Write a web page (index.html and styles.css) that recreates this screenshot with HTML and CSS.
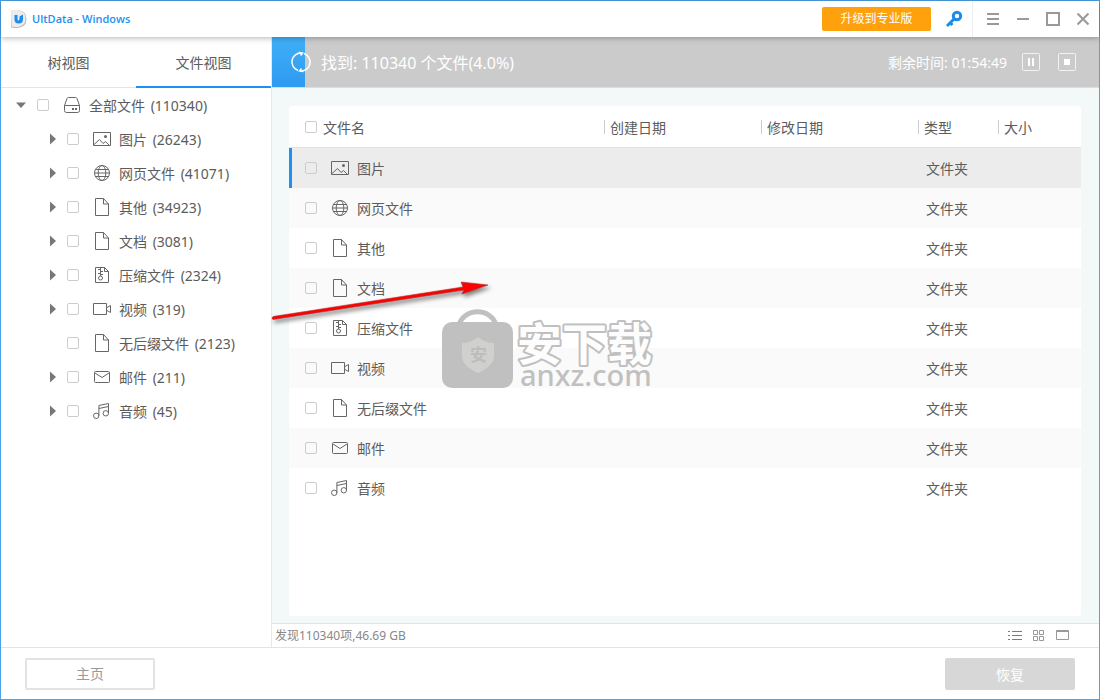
FILE: index.html
```html
<!DOCTYPE html>
<html lang="zh-CN">
<head>
<meta charset="utf-8">
<title>UltData - Windows</title>
<link rel="stylesheet" href="styles.css">
</head>
<body>
<svg class="sprite" aria-hidden="true">
  <symbol id="i-drive" viewBox="0 0 18 18"><path d="M1.500 9.500 4 2.500Q4.500 1.500 5.500 1.500h7Q13.500 1.500 14 2.500l2.500 7M1.500 9.500h15v5q0 2-2 2h-11q-2 0-2-2z"/><path d="M9 12h2v2H9zM12 12h2v2h-2z" class="solid"/></symbol>
  <symbol id="i-image" viewBox="0 0 18 18"><path d="M.5 2.500h17v13H.5zM1 14.500l5.500-5 3.500 4 2.500-2 3.500 3.500"/><circle cx="12.500" cy="6.500" r="1.500" class="solid"/></symbol>
  <symbol id="i-globe" viewBox="0 0 18 18"><circle cx="9" cy="9" r="7.500"/><ellipse cx="9" cy="9" rx="3.800" ry="7.500"/><path d="M2.500 5.500h13M1.500 9h15M2.500 12.500h13"/></symbol>
  <symbol id="i-file" viewBox="0 0 18 18"><path d="M2.500.5h8l5 5.500v11.500h-13zM10.500.5v5.500h5"/></symbol>
  <symbol id="i-zip" viewBox="0 0 18 18"><path d="M2.500 1.500h9l4 4v11h-13zM11.500 1.500v4h4M7.500 2v8M5 3.500h2.500M7.500 5.500H10M5 7.500h2.500M7.500 8.500H10"/><circle cx="7.500" cy="12" r="2"/></symbol>
  <symbol id="i-video" viewBox="0 0 18 18"><path d="M.5 3.500h13v11H.5zM14 7.500l3.500-2v7l-3.500-2"/></symbol>
  <symbol id="i-mail" viewBox="0 0 18 18"><rect x="1.500" y="3.500" width="15" height="11" rx="1"/><path d="M2 5l7 4.500L16 5"/></symbol>
  <symbol id="i-music" viewBox="0 0 18 18"><circle cx="3.200" cy="13.800" r="2.700"/><circle cx="12.800" cy="11.300" r="2.700"/><path d="M5.900 13.800V3.500l9.600-2v9.800M5.900 6.500l9.600-2"/></symbol>
  <symbol id="i-open" viewBox="0 0 12 12"><path d="M1 3.500h10L6 9z" class="fold"/></symbol>
  <symbol id="i-closed" viewBox="0 0 12 12"><path d="M3 .5v11L9 6z" class="fold"/></symbol>
</svg>

<div class="window">
  <header class="titlebar">
    <svg class="logo" viewBox="0 0 16 18" aria-hidden="true"><path d="M0 0h7q8.500 1 8.500 9T7 18H2q-2 0-2-2z" fill="#bbb"/><path d="M0 0h7q7.500 1 7.500 8.500T7 17H2q-1.500 0-1.500-2z" fill="#ececec"/><path d="M3.500 5h3v4q0 1.500 1 1.500T8.500 9V6.500L12 4.500V9q0 4.500-4.300 4.500T3.500 9z" fill="#1b8dea"/></svg>
    <h1 class="title">UltData - Windows</h1>
    <button class="upgrade" type="button">升级到专业版</button>
    <button class="tool key" type="button" aria-label="注册"><svg viewBox="0 0 18 18"><circle cx="12" cy="6" r="3.700"/><path d="M9.500 8.500 2 16M4.500 12l3 3M2 14l2 2"/></svg></button>
    <div class="controls">
      <button class="tool" type="button" aria-label="菜单"><svg viewBox="0 0 14 14"><path d="M1 2h12M1 7h12M1 12h12"/></svg></button>
      <button class="tool" type="button" aria-label="最小化"><svg viewBox="0 0 14 14"><path d="M1 7h12"/></svg></button>
      <button class="tool" type="button" aria-label="最大化"><svg viewBox="0 0 14 14"><path d="M1 1h12v12H1z"/></svg></button>
      <button class="tool" type="button" aria-label="关闭"><svg viewBox="0 0 14 14"><path d="M1.500 1.500l11 11M12.500 1.500l-11 11"/></svg></button>
    </div>
  </header>

  <div class="body">
    <aside class="sidebar">
      <nav class="tabs">
        <button class="tab" type="button">树视图</button>
        <button class="tab active" type="button">文件视图</button>
      </nav>
      <ul class="tree">
        <li class="node root"><svg class="twist"><use href="#i-open"/></svg><label class="pick"><input type="checkbox"><svg class="icon"><use href="#i-drive"/></svg><span class="name">全部文件 <span class="count">(110340)</span></span></label></li>
        <li class="node"><svg class="twist"><use href="#i-closed"/></svg><label class="pick"><input type="checkbox"><svg class="icon"><use href="#i-image"/></svg><span class="name">图片 <span class="count">(26243)</span></span></label></li>
        <li class="node"><svg class="twist"><use href="#i-closed"/></svg><label class="pick"><input type="checkbox"><svg class="icon"><use href="#i-globe"/></svg><span class="name">网页文件 <span class="count">(41071)</span></span></label></li>
        <li class="node"><svg class="twist"><use href="#i-closed"/></svg><label class="pick"><input type="checkbox"><svg class="icon"><use href="#i-file"/></svg><span class="name">其他 <span class="count">(34923)</span></span></label></li>
        <li class="node"><svg class="twist"><use href="#i-closed"/></svg><label class="pick"><input type="checkbox"><svg class="icon"><use href="#i-file"/></svg><span class="name">文档 <span class="count">(3081)</span></span></label></li>
        <li class="node"><svg class="twist"><use href="#i-closed"/></svg><label class="pick"><input type="checkbox"><svg class="icon"><use href="#i-zip"/></svg><span class="name">压缩文件 <span class="count">(2324)</span></span></label></li>
        <li class="node"><svg class="twist"><use href="#i-closed"/></svg><label class="pick"><input type="checkbox"><svg class="icon"><use href="#i-video"/></svg><span class="name">视频 <span class="count">(319)</span></span></label></li>
        <li class="node"><svg class="twist"></svg><label class="pick"><input type="checkbox"><svg class="icon"><use href="#i-file"/></svg><span class="name">无后缀文件 <span class="count">(2123)</span></span></label></li>
        <li class="node"><svg class="twist"><use href="#i-closed"/></svg><label class="pick"><input type="checkbox"><svg class="icon"><use href="#i-mail"/></svg><span class="name">邮件 <span class="count">(211)</span></span></label></li>
        <li class="node"><svg class="twist"><use href="#i-closed"/></svg><label class="pick"><input type="checkbox"><svg class="icon"><use href="#i-music"/></svg><span class="name">音频 <span class="count">(45)</span></span></label></li>
      </ul>
    </aside>

    <main class="main">
      <section class="scan">
        <div class="scan-fill" style="width: 4%"></div>
        <svg class="spinner" viewBox="0 0 22 22" aria-hidden="true"><path d="M8 19.500A9 9 0 0 1 11.500 2M8.500 1.500l4 .5-2 2.500M14 2.500A9 9 0 0 1 10.500 20M13.500 20.500l-4-.5 2-2.500"/></svg>
        <span class="found">找到: 110340 个文件(4.0%)</span>
        <span class="remaining">剩余时间: 01:54:49</span>
        <button class="scan-btn" type="button" aria-label="暂停"><svg viewBox="0 0 18 18"><rect x=".5" y=".5" width="17" height="17" rx="1"/><path d="M6 5h2v8H6zM10 5h2v8h-2z" class="white"/></svg></button>
        <button class="scan-btn" type="button" aria-label="停止"><svg viewBox="0 0 18 18"><rect x=".5" y=".5" width="17" height="17" rx="1"/><path d="M6 6h6v6H6z" class="white"/></svg></button>
      </section>

      <section class="content">
        <div class="panel">
          <table class="files">
            <colgroup><col class="c-name"><col class="c-date"><col class="c-date"><col class="c-type"><col class="c-size"></colgroup>
            <thead>
              <tr><th><label class="pick all"><input type="checkbox"><span class="name">文件名</span></label></th><th><span class="head"><span class="name">创建日期</span></span></th><th><span class="head"><span class="name">修改日期</span></span></th><th><span class="head"><span class="name">类型</span></span></th><th><span class="head"><span class="name">大小</span></span></th></tr>
            </thead>
            <tbody>
              <tr class="selected"><td><label class="pick"><input type="checkbox"><svg class="icon"><use href="#i-image"/></svg><span class="name">图片</span></label></td><td></td><td></td><td><span class="name">文件夹</span></td><td></td></tr>
              <tr><td><label class="pick"><input type="checkbox"><svg class="icon"><use href="#i-globe"/></svg><span class="name">网页文件</span></label></td><td></td><td></td><td><span class="name">文件夹</span></td><td></td></tr>
              <tr><td><label class="pick"><input type="checkbox"><svg class="icon"><use href="#i-file"/></svg><span class="name">其他</span></label></td><td></td><td></td><td><span class="name">文件夹</span></td><td></td></tr>
              <tr><td><label class="pick"><input type="checkbox"><svg class="icon"><use href="#i-file"/></svg><span class="name">文档</span></label></td><td></td><td></td><td><span class="name">文件夹</span></td><td></td></tr>
              <tr><td><label class="pick"><input type="checkbox"><svg class="icon"><use href="#i-zip"/></svg><span class="name">压缩文件</span></label></td><td></td><td></td><td><span class="name">文件夹</span></td><td></td></tr>
              <tr><td><label class="pick"><input type="checkbox"><svg class="icon"><use href="#i-video"/></svg><span class="name">视频</span></label></td><td></td><td></td><td><span class="name">文件夹</span></td><td></td></tr>
              <tr><td><label class="pick"><input type="checkbox"><svg class="icon"><use href="#i-file"/></svg><span class="name">无后缀文件</span></label></td><td></td><td></td><td><span class="name">文件夹</span></td><td></td></tr>
              <tr><td><label class="pick"><input type="checkbox"><svg class="icon"><use href="#i-mail"/></svg><span class="name">邮件</span></label></td><td></td><td></td><td><span class="name">文件夹</span></td><td></td></tr>
              <tr><td><label class="pick"><input type="checkbox"><svg class="icon"><use href="#i-music"/></svg><span class="name">音频</span></label></td><td></td><td></td><td><span class="name">文件夹</span></td><td></td></tr>
            </tbody>
          </table>
        </div>
      </section>

      <div class="status">
        <span class="summary">发现110340项,46.69 GB</span>
        <button class="view on" type="button" aria-label="列表"><svg viewBox="0 0 14 12"><path d="M0 1.500h2M4 1.500h10M0 5.500h2M4 5.500h10M0 9.500h2M4 9.500h10"/></svg></button>
        <button class="view" type="button" aria-label="网格"><svg viewBox="0 0 14 12"><path d="M1.500.5h4v4h-4zM7.500.5h4v4h-4zM1.500 6.500h4v4h-4zM7.500 6.500h4v4h-4z"/></svg></button>
        <button class="view" type="button" aria-label="预览"><svg viewBox="0 0 14 12"><path d="M.5.5h12v9H.5zM0 1.500h13"/></svg></button>
      </div>
    </main>
  </div>

  <footer class="footer">
    <button class="btn home" type="button">主页</button>
    <button class="btn recover" type="button">恢复</button>
  </footer>

  <svg class="arrow" viewBox="0 0 226 50" aria-hidden="true"><path d="M2 37.500 192 8l-2-5 27 3-26 9 2-4L2 40.500q-2-1 0-3z" fill="#f00" stroke="#a33" stroke-width=".6"/></svg>
  <svg class="watermark" viewBox="0 0 220 84" aria-hidden="true">
    <path d="M19 17a19 17 0 0 1 37 0" fill="none" stroke="#c0c0c0" stroke-width="5"/>
    <rect x="2" y="14" width="71" height="66" rx="10" fill="#c0c0c0"/>
    <path d="M38 29q7 6 16 6v13q0 10-16 17-16-7-16-17V35q9 0 16-6z" fill="#d0d0cf"/>
    <text x="30" y="53" class="badge">安</text>
    <text x="77" y="53" class="brand">安下载</text>
    <text x="80" y="78" class="domain">anxz.com</text>
  </svg>
</div>
</body>
</html>
```
FILE: styles.css
```css
* { box-sizing: border-box; }

body {
  margin: 0;
  color: #5c5c5c;
  font: 14px/20px "Noto Sans", "Noto Sans CJK SC", sans-serif;
}

button {
  padding: 0;
  border: 0;
  background: none;
  color: inherit;
  font: inherit;
}

svg { flex: none; }

.sprite { position: absolute; width: 0; height: 0; }

.window {
  position: relative;
  display: flex;
  flex-direction: column;
  min-height: 100vh;
  border: 1px solid #4ba3ea;
  background: #fff;
}

/* Title bar */
.titlebar {
  position: relative;
  z-index: 2;
  display: flex;
  align-items: center;
  height: 36px;
  padding-left: 10px;
  background: #fff;
  box-shadow: 0 1px 6px rgba(0, 0, 0, .3);
}

.logo { width: 16px; height: 18px; }

.title {
  flex: 1;
  margin: 0 0 0 5px;
  color: #1e90f0;
  font-family: "Open Sans", sans-serif;
  font-size: 11px;
  font-weight: 600;
}

.upgrade {
  width: 109px;
  height: 24px;
  border-radius: 2px;
  background: #ffa10d;
  color: #fff;
  font-size: 12px;
}

.tool {
  display: flex;
  align-items: center;
  justify-content: center;
  width: 30px;
  height: 36px;
}

.tool svg { width: 14px; height: 14px; fill: none; stroke: #999; stroke-width: 2; }
.controls { display: flex; padding: 0 1px 0 5px; border-left: 1px solid #eee; }
.tool.key { justify-content: flex-start; width: 41px; padding-left: 14px; }
.key svg { width: 18px; height: 18px; stroke: #1a8cf0; stroke-width: 3; }

/* Body */
.body { display: flex; flex: 1; }

.sidebar { flex: none; width: 270px; }

.tabs { display: flex; height: 51px; border-bottom: 1px solid #e5e5e5; }
.tab { flex: 1; height: 51px; padding-top: 2px; border-bottom: 2px solid transparent; }
.tab.active { border-color: #1e90f0; }

.tree { margin: 0; padding: 0; list-style: none; }
.node { display: flex; align-items: center; height: 34px; padding-left: 46px; }
.node.root { padding-left: 14px; }
.twist { width: 12px; height: 12px; margin-right: 8px; }
.root .twist { margin-right: 10px; }
.fold { fill: #777; }

.pick { display: flex; align-items: center; }
.name { display: block; padding-top: 2px; }
.count { margin-left: 2px; }

.pick input {
  flex: none;
  width: 12px;
  height: 12px;
  margin: 0 14px 0 0;
  border: 1px solid #ccc;
  border-radius: 2px;
  background: transparent;
  appearance: none;
}

.pick.all input { margin-right: 6px; }

.icon {
  width: 18px;
  height: 18px;
  margin-right: 8px;
  fill: none;
  stroke: #666;
  stroke-width: 1;
}

.solid { fill: #666; stroke: none; }

.main {
  display: flex;
  flex: 1;
  flex-direction: column;
  min-width: 0;
  border-left: 1px solid #e5e9e9;
}

/* Scan progress */
.scan {
  position: relative;
  display: flex;
  align-items: center;
  height: 51px;
  padding: 0 23px 0 18px;
  border-bottom: 1px solid #ddd;
  background: #cbcbcb;
  color: #fff;
}

.scan-fill {
  position: absolute;
  inset: 0 auto 0 0;
  background: linear-gradient(#40b0f8, #2e9af1);
}

.spinner {
  position: relative;
  width: 22px;
  height: 22px;
  fill: none;
  stroke: #fff;
  stroke-width: 1.5;
}

.found { flex: 1; margin-left: 9px; padding-top: 2px; font-size: 16px; }
.remaining { padding-top: 2px; }
.scan-btn { display: flex; margin-left: 15px; }
.scan-btn + .scan-btn { margin-left: 18px; }
.scan-btn svg { width: 18px; height: 18px; fill: none; stroke: #f2f2f2; }
.scan-btn .white { fill: #fff; stroke: none; }

/* File list */
.content { display: flex; flex: 1; padding: 18px 18px 7px 17px; background: #f3f9f9; }
.panel { flex: 1; border-radius: 3px; background: #fff; }

.files { width: 100%; table-layout: fixed; border-spacing: 0; }
.c-name { width: 315px; }
.c-date { width: 157px; }
.c-type { width: 80px; }

.files th {
  height: 42px;
  padding: 0;
  border-bottom: 1px solid #e3e3e3;
  font-weight: 400;
  text-align: left;
}

.files td { height: 40px; padding: 0 0 0 8px; }
.files th:first-child, .files td:first-child { padding-left: 16px; }
.head { display: block; padding-left: 5px; border-left: 1px solid #ccc; line-height: 12px; }
.files tbody tr:nth-child(even) { background: #fafafa; }
.files tbody .selected { background: #ececec; }
.selected td:first-child { box-shadow: inset 3px 0 #1e90f0; }

/* Status bar */
.status {
  display: flex;
  align-items: center;
  height: 24px;
  padding: 0 29px 0 3px;
  border-top: 1px solid #e3e3e3;
  color: #888;
  font-size: 12px;
}

.summary { flex: 1; }
.view { display: flex; margin-left: 10px; }
.view svg { width: 14px; height: 12px; fill: none; stroke: #999; }
.view.on svg { stroke: #1e90ff; }

/* Footer */
.footer {
  display: flex;
  align-items: center;
  justify-content: space-between;
  height: 52px;
  padding: 0 24px;
  border-top: 1px solid #e3e3e3;
}

.btn { width: 130px; height: 32px; padding-top: 2px; border-radius: 2px; }
.home { padding-top: 0; border: 2px solid #e3e3e3; color: #999; }
.recover { background: #d7d7d7; color: #fff; }

/* Overlays on the canvas */
.arrow {
  position: absolute;
  top: 278px;
  left: 270px;
  width: 226px;
  height: 50px;
  filter: drop-shadow(2px 3px 2px rgba(0, 0, 0, .5));
  pointer-events: none;
}

.watermark {
  position: absolute;
  top: 307px;
  left: 439px;
  width: 220px;
  height: 84px;
  overflow: visible;
  pointer-events: none;
}

.badge { fill: #bdbdbd; font-size: 17px; font-weight: 700; }

.brand {
  fill: #fdfdfd;
  stroke: #c0c0c0;
  stroke-width: 4;
  stroke-linejoin: round;
  paint-order: stroke;
  font-size: 45px;
  font-weight: 700;
}

.domain { fill: #c0c0c0; font-size: 29px; font-weight: 500; }
```
